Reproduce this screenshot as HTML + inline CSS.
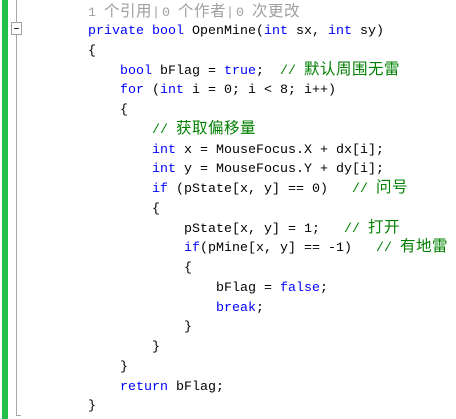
<!DOCTYPE html>
<html><head><meta charset="utf-8"><style>
html,body{margin:0;padding:0;background:#fff;width:456px;height:419px;overflow:hidden;position:relative}
.g{position:absolute;left:2px;top:0;width:6px;height:419px;background:#22c24a}
.v{position:absolute;left:16px;top:0;width:1px;height:416px;background:#a8a8a8}
.h{position:absolute;left:16px;top:415px;width:5px;height:1px;background:#a8a8a8}
.box{position:absolute;left:11px;top:22px;width:9px;height:11px;border:1px solid #a0a0a0;background:#fff}
.box:after{content:"";position:absolute;left:2px;top:5px;width:5px;height:1px;background:#333}
pre{position:absolute;margin:0;left:88px;font-family:"Liberation Mono","Noto Sans CJK SC",monospace;font-size:13.33px;color:#000}
.code{top:22px;line-height:19.75px}
.lens{top:4px;line-height:20px;color:#a0a0a0}
.k{color:#0000ff}.c{color:#008000}
.z{font-size:15.5px;line-height:10px;letter-spacing:0.5px}
.s{letter-spacing:2px}
</style></head><body>
<div class="g"></div><div class="v"></div><div class="h"></div><div class="box"></div>
<pre class="lens">1 <span class="z">个引用</span><span class="s">|</span>0 <span class="z">个作者</span><span class="s">|</span>0 <span class="z">次更改</span></pre>
<pre class="code"><span class="k">private</span> <span class="k">bool</span> OpenMine(<span class="k">int</span> sx, <span class="k">int</span> sy)
{
    <span class="k">bool</span> bFlag = <span class="k">true</span>;  <span class="c">// <span class="z">默认周围无雷</span></span>
    <span class="k">for</span> (<span class="k">int</span> i = 0; i &lt; 8; i++)
    {
        <span class="c">// <span class="z">获取偏移量</span></span>
        <span class="k">int</span> x = MouseFocus.X + dx[i];
        <span class="k">int</span> y = MouseFocus.Y + dy[i];
        <span class="k">if</span> (pState[x, y] == 0)   <span class="c">// <span class="z">问号</span></span>
        {
            pState[x, y] = 1;   <span class="c">// <span class="z">打开</span></span>
            <span class="k">if</span>(pMine[x, y] == -1)   <span class="c">// <span class="z">有地雷</span></span>
            {
                bFlag = <span class="k">false</span>;
                <span class="k">break</span>;
            }
        }
    }
    <span class="k">return</span> bFlag;
}</pre>
</body></html>
